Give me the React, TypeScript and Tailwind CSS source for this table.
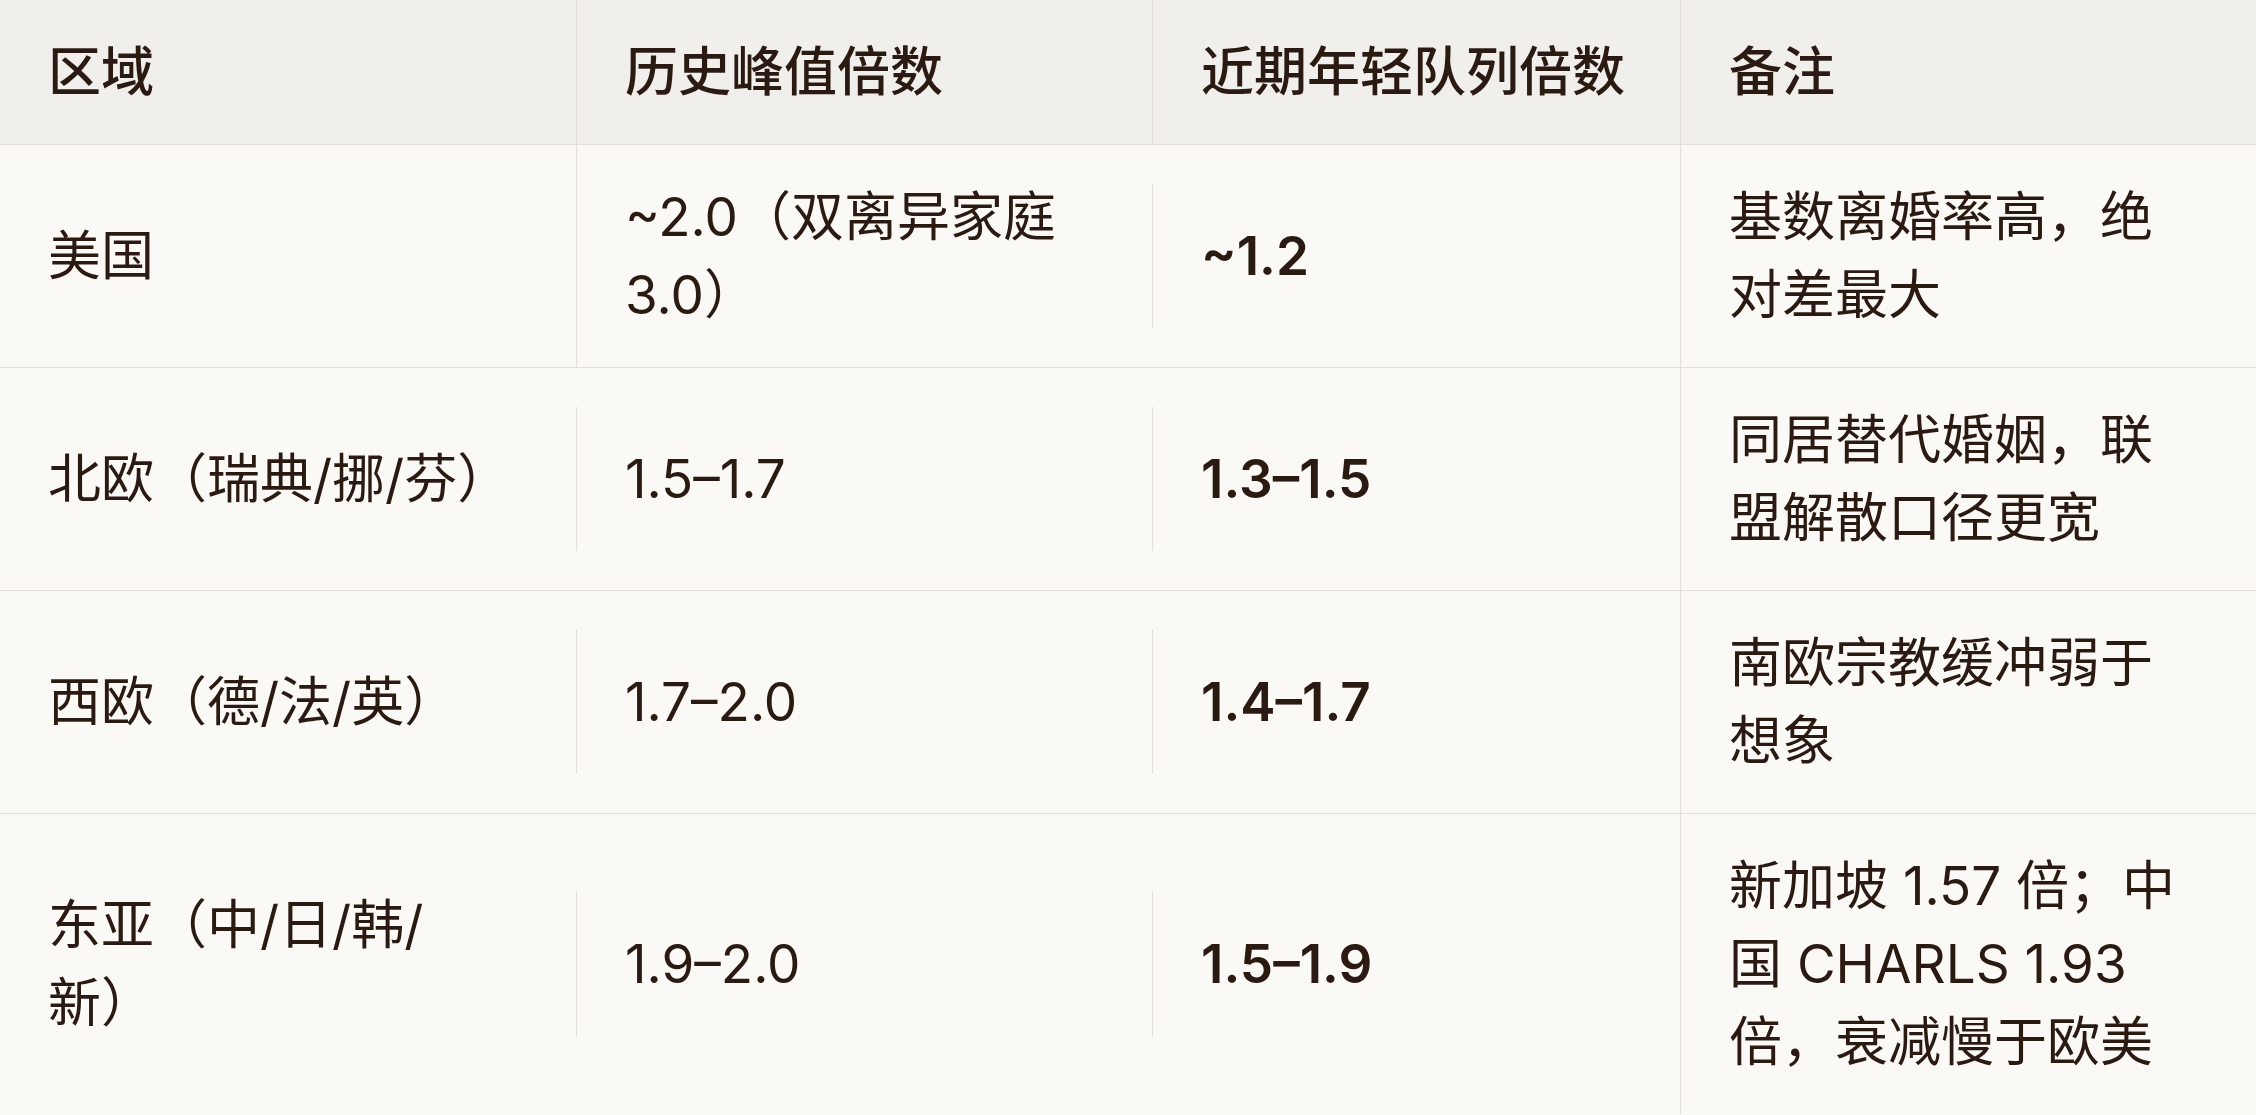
const rows = [
  { region: '美国', peak: '~2.0（双离异家庭3.0）', recent: '~1.2', note: '基数离婚率高，绝对差最大' },
  { region: '北欧（瑞典/挪/芬）', peak: '1.5–1.7', recent: '1.3–1.5', note: '同居替代婚姻，联盟解散口径更宽' },
  { region: '西欧（德/法/英）', peak: '1.7–2.0', recent: '1.4–1.7', note: '南欧宗教缓冲弱于想象' },
  { region: '东亚（中/日/韩/新）', peak: '1.9–2.0', recent: '1.5–1.9', note: '新加坡 1.57 倍；中国 CHARLS 1.93 倍，衰减慢于欧美' },
]

const grid = 'grid grid-cols-[576px_576px_528px_576px] items-center'
const cell = 'pl-12 py-[33px] break-words'
const wide = 'pr-[78px]'
const divided = 'border-l border-[#e2dfd9]'

export default function App() {
  return (
    <div
      className="w-[2256px] min-h-[1115px] bg-[#faf9f6] text-[#2a1a12] text-[53px] leading-[78px]"
      style={{ fontFamily: 'Inter, "Noto Sans CJK SC", sans-serif' }}
    >
      <div className={`${grid} bg-[#f0efeb] border-b border-[#e2dfd9] font-medium`}>
        <div className={`${cell} ${wide}`}>区域</div>
        <div className={`${cell} ${wide} ${divided}`}>历史峰值倍数</div>
        <div className={`${cell} pr-12 ${divided}`}>近期年轻队列倍数</div>
        <div className={`${cell} ${wide} ${divided}`}>备注</div>
      </div>
      {rows.map((r, i) => (
        <div key={r.region} className={`${grid} ${i < rows.length - 1 ? 'border-b border-[#e2dfd9]' : ''}`}>
          <div className={`${cell} ${wide}`}>{r.region}</div>
          <div className={`${cell} ${wide} ${divided}`}>{r.peak}</div>
          <div className={`${cell} pr-12 ${divided} font-semibold`}>{r.recent}</div>
          <div className={`${cell} ${wide} ${divided}`}>{r.note}</div>
        </div>
      ))}
    </div>
  )
}
